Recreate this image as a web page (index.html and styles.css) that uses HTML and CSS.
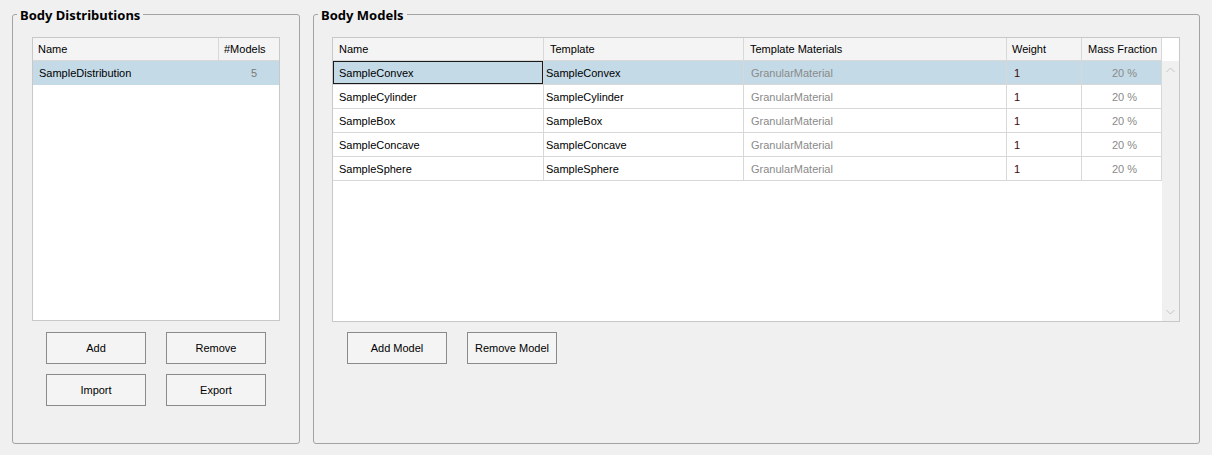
FILE: index.html
```html
<!DOCTYPE html>
<html>
<head>
<meta charset="utf-8">
<title>Body Distributions</title>
<link rel="stylesheet" href="styles.css">
</head>
<body>
<div class="app">
  <section class="group group-dist">
    <div class="group-title">Body Distributions</div>
    <div class="list">
      <div class="list-head">
        <div class="lh-cell">Name</div>
        <div class="lh-cell">#Models</div>
      </div>
      <div class="list-row selected">
        <div class="lc-name">SampleDistribution</div>
        <div class="lc-models">5</div>
      </div>
    </div>
    <div class="btn-grid">
      <button class="btn">Add</button>
      <button class="btn">Remove</button>
      <button class="btn">Import</button>
      <button class="btn">Export</button>
    </div>
  </section>

  <section class="group group-models">
    <div class="group-title">Body Models</div>
    <div class="grid">
      <div class="grid-body">
        <div class="grid-row grid-head">
          <div class="cell">Name</div>
          <div class="cell">Template</div>
          <div class="cell">Template Materials</div>
          <div class="cell">Weight</div>
          <div class="cell">Mass Fraction</div>
        </div>
        <div class="grid-row selected">
          <div class="cell c-name focus">SampleConvex</div>
          <div class="cell c-tpl">SampleConvex</div>
          <div class="cell c-mat">GranularMaterial</div>
          <div class="cell c-w">1</div>
          <div class="cell c-mf">20 %</div>
        </div>
        <div class="grid-row">
          <div class="cell c-name">SampleCylinder</div>
          <div class="cell c-tpl">SampleCylinder</div>
          <div class="cell c-mat">GranularMaterial</div>
          <div class="cell c-w">1</div>
          <div class="cell c-mf">20 %</div>
        </div>
        <div class="grid-row">
          <div class="cell c-name">SampleBox</div>
          <div class="cell c-tpl">SampleBox</div>
          <div class="cell c-mat">GranularMaterial</div>
          <div class="cell c-w">1</div>
          <div class="cell c-mf">20 %</div>
        </div>
        <div class="grid-row">
          <div class="cell c-name">SampleConcave</div>
          <div class="cell c-tpl">SampleConcave</div>
          <div class="cell c-mat">GranularMaterial</div>
          <div class="cell c-w">1</div>
          <div class="cell c-mf">20 %</div>
        </div>
        <div class="grid-row">
          <div class="cell c-name">SampleSphere</div>
          <div class="cell c-tpl">SampleSphere</div>
          <div class="cell c-mat">GranularMaterial</div>
          <div class="cell c-w">1</div>
          <div class="cell c-mf">20 %</div>
        </div>
      </div>
      <div class="vscroll">
        <div class="vs-head"></div>
        <div class="vs-track">
          <svg class="chev" width="9" height="6" viewBox="0 0 9 6"><polyline points="0.5,5 4.5,1 8.5,5" fill="none" stroke="#c4c4c4" stroke-width="1"/></svg>
          <svg class="chev" width="9" height="6" viewBox="0 0 9 6"><polyline points="0.5,1 4.5,5 8.5,1" fill="none" stroke="#c4c4c4" stroke-width="1"/></svg>
        </div>
      </div>
    </div>
    <div class="btn-row">
      <button class="btn w100">Add Model</button>
      <button class="btn w90">Remove Model</button>
    </div>
  </section>
</div>
</body>
</html>
```

FILE: styles.css
```css
html, body {
  margin: 0;
  padding: 0;
}
body {
  background: #f0f0f0;
  font-family: "Liberation Sans", Arial, sans-serif;
  font-size: 11px;
  color: #000;
}
.app {
  display: flex;
  gap: 13px;
  padding: 14px 12px 11px 12px;
  height: 455px;
  box-sizing: border-box;
}
.group {
  position: relative;
  border: 1px solid #a3a3a3;
  border-radius: 3px;
  box-sizing: border-box;
  height: 430px;
}
.group-dist {
  width: 288px;
  padding: 22px 19px 0 19px;
}
.group-models {
  width: 887px;
  padding: 22px 0 0 18px;
}
.group-title {
  position: absolute;
  top: -7px;
  left: 4px;
  padding: 0 3px;
  background: #f0f0f0;
  font-family: "Noto Sans", "Liberation Sans", Arial, sans-serif;
  font-weight: bold;
  font-size: 13px;
  line-height: 14px;
  white-space: nowrap;
}

/* left list */
.list {
  width: 248px;
  height: 284px;
  border: 1px solid #c8c8c8;
  background: #fff;
  box-sizing: border-box;
}
.list-head {
  display: grid;
  grid-template-columns: 186px 60px;
  height: 23px;
  background: #f4f4f4;
  border-bottom: 1px solid #d8d8d8;
  box-sizing: border-box;
}
.lh-cell {
  padding-left: 5px;
  line-height: 22px;
  border-right: 1px solid #d8d8d8;
  white-space: nowrap;
}
.lh-cell:last-child {
  border-right: none;
}
.list-row {
  display: grid;
  grid-template-columns: 186px 60px;
  height: 24px;
  line-height: 23px;
  padding-top: 1px;
  box-sizing: border-box;
}
.list-row.selected {
  background: #c4dae7;
}
.lc-name {
  padding-left: 6px;
}
.lc-models {
  text-align: right;
  padding-right: 22px;
  color: #7a7a7a;
}

/* buttons */
.btn {
  height: 32px;
  border: 1px solid #8a8a8a;
  background: #f4f4f4;
  font-family: inherit;
  font-size: 11px;
  color: #000;
  padding: 0;
  margin: 0;
  box-sizing: border-box;
}
.btn-grid {
  display: grid;
  grid-template-columns: 100px 100px;
  column-gap: 20px;
  row-gap: 10px;
  margin: 11px 0 0 14px;
}
.btn-row {
  display: flex;
  gap: 20px;
  margin: 10px 0 0 15px;
}
.w100 { width: 100px; }
.w90 { width: 90px; }

/* right grid */
.grid {
  display: flex;
  width: 848px;
  height: 285px;
  border: 1px solid #c8c8c8;
  background: #fff;
  box-sizing: border-box;
}
.grid-body {
  width: 829px;
}
.grid-row {
  display: grid;
  grid-template-columns: 211px 200px 263px 75px 80px;
  height: 24px;
}
.cell {
  box-sizing: border-box;
  border-right: 1px solid #d8d8d8;
  border-bottom: 1px solid #d8d8d8;
  padding-left: 6px;
  padding-top: 1px;
  line-height: 22px;
  white-space: nowrap;
  overflow: hidden;
}
.grid-head {
  height: 23px;
}
.grid-head .cell {
  background: #f4f4f4;
  line-height: 21px;
}
.grid-head .cell:nth-child(4) {
  padding-left: 5px;
}
.grid-row.selected .cell {
  background: #c4dae7;
}
.cell.focus {
  box-shadow: inset 0 0 0 1px #1a1a1a;
}
.c-tpl {
  padding-left: 2px;
}
.c-mat {
  padding-left: 7px;
  color: #8a8a8a;
}
.c-w {
  padding-left: 7px;
  color: #3a0808;
}
.c-mf {
  padding-left: 30px;
  color: #8a8a8a;
}
.vscroll {
  width: 17px;
  display: flex;
  flex-direction: column;
}
.vs-head {
  height: 23px;
  background: #fff;
}
.vs-track {
  flex: 1;
  background: #f0f0f0;
  display: flex;
  flex-direction: column;
  justify-content: space-between;
  align-items: center;
  padding: 6px 0 6px 0;
}
.chev {
  display: block;
}
```
